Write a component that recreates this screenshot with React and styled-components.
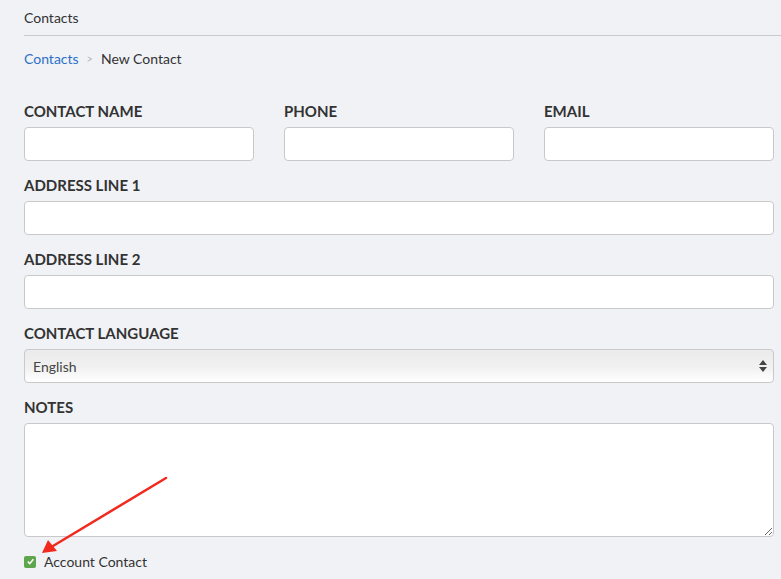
import React from "react";
import styled, { createGlobalStyle } from "styled-components";

const GlobalStyle = createGlobalStyle`
  html, body {
    margin: 0;
    padding: 0;
    background: #f1f2f6;
    font-family: Lato, "Open Sans", sans-serif;
    color: #333;
  }
`;

const Page = styled.div`
  position: relative;
  width: 781px;
  height: 579px;
  overflow: hidden;
  background: #f1f2f6;
`;

const Header = styled.div`
  margin-left: 24px;
  padding: 10px 0 9px;
  font-size: 14px;
  line-height: 16px;
  color: #333;
  border-bottom: 1px solid #c9cacf;
`;

const Breadcrumb = styled.div`
  display: flex;
  align-items: center;
  gap: 8px;
  padding: 15px 24px 0;
  font-size: 14px;
  line-height: 16px;
  color: #333;
`;

const Crumb = styled.a`
  color: #2b70c6;
  text-decoration: none;
`;

const Chevron = styled.span`
  color: #b5b6ba;
  font-size: 11px;
`;

const Form = styled.form`
  padding: 36px 7px 0 24px;
`;

const Row = styled.div`
  display: grid;
  grid-template-columns: repeat(${(p) => p.cols || 1}, 1fr);
  column-gap: 30px;
`;

const Field = styled.div`
  margin-bottom: 16px;
`;

const Label = styled.label`
  display: block;
  font-size: 15px;
  line-height: 16px;
  font-weight: 700;
  color: #333;
  margin-bottom: 8px;
`;

const Input = styled.input`
  box-sizing: border-box;
  width: 100%;
  height: 34px;
  border: 1px solid #c9c9c9;
  border-radius: 4px;
  background: #fff;
  font-family: inherit;
  font-size: 13px;
  padding: 0 8px;
  outline: none;
`;

const SelectWrap = styled.div`
  position: relative;
`;

const Select = styled.select`
  box-sizing: border-box;
  width: 100%;
  height: 34px;
  appearance: none;
  border: 1px solid #c9c9c9;
  border-radius: 4px;
  background: linear-gradient(#ebebeb, #f1f1f1 55%, #ffffff);
  font-family: inherit;
  font-size: 14px;
  color: #444;
  padding: 0 8px;
  outline: none;
`;

const Arrows = styled.svg`
  position: absolute;
  right: 7px;
  top: 11px;
  pointer-events: none;
`;

const TextArea = styled.textarea`
  box-sizing: border-box;
  display: block;
  width: 100%;
  height: 114px;
  border: 1px solid #c9c9c9;
  border-radius: 4px;
  background: #fff;
  font-family: inherit;
  outline: none;
`;

const CheckRow = styled.label`
  display: flex;
  align-items: center;
  gap: 8px;
  font-size: 14px;
  color: #333;
`;

const Box = styled.span`
  width: 12px;
  height: 12px;
  border-radius: 2px;
  background: #5ea64b;
  display: flex;
  align-items: center;
  justify-content: center;
`;

const Annotation = styled.svg`
  position: absolute;
  left: 0;
  top: 0;
  pointer-events: none;
`;

export default function App() {
  return (
    <Page>
      <GlobalStyle />
      <Header>Contacts</Header>
      <Breadcrumb>
        <Crumb href="#">Contacts</Crumb>
        <Chevron>&gt;</Chevron>
        <span>New Contact</span>
      </Breadcrumb>
      <Form>
        <Row cols={3}>
          <Field>
            <Label>CONTACT NAME</Label>
            <Input />
          </Field>
          <Field>
            <Label>PHONE</Label>
            <Input />
          </Field>
          <Field>
            <Label>EMAIL</Label>
            <Input />
          </Field>
        </Row>
        <Field>
          <Label>ADDRESS LINE 1</Label>
          <Input />
        </Field>
        <Field>
          <Label>ADDRESS LINE 2</Label>
          <Input />
        </Field>
        <Field>
          <Label>CONTACT LANGUAGE</Label>
          <SelectWrap>
            <Select defaultValue="en">
              <option value="en">English</option>
            </Select>
            <Arrows width="8" height="12" viewBox="0 0 8 12">
              <path d="M4 0 L8 5 L0 5 Z" fill="#444" />
              <path d="M4 12 L8 7 L0 7 Z" fill="#444" />
            </Arrows>
          </SelectWrap>
        </Field>
        <Field>
          <Label>NOTES</Label>
          <TextArea />
        </Field>
        <CheckRow>
          <Box>
            <svg width="9" height="9" viewBox="0 0 10 10">
              <path d="M2 5.2 L4.2 7.4 L8.2 2.6" stroke="#fff" strokeWidth="1.8" fill="none" />
            </svg>
          </Box>
          Account Contact
        </CheckRow>
      </Form>
      <Annotation width="781" height="579" viewBox="0 0 781 579">
        <line x1="166" y1="478" x2="53" y2="546" stroke="#f2291d" strokeWidth="2.5" strokeLinecap="round" />
        <path d="M42 553 L48 540 L57 551 Z" fill="#f2291d" />
      </Annotation>
    </Page>
  );
}
